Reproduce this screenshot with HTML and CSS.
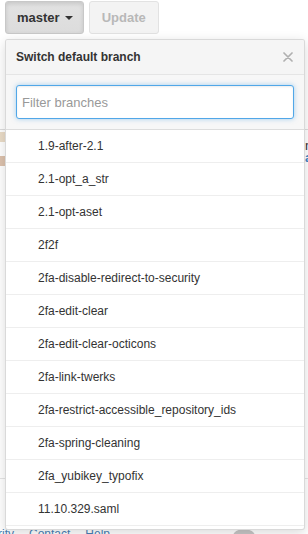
FILE: index.html
```html
<!DOCTYPE html>
<html>
<head>
<meta charset="utf-8">
<link rel="stylesheet" href="styles.css">
</head>
<body>
<div class="toolbar">
  <button class="btn btn-selected">master <span class="caret"></span></button>
  <button class="btn btn-disabled" disabled>Update</button>
</div>
<div class="page">
  <div class="bg-row">
    <span class="avatar"></span>
    <span class="bg-text">n<br><span class="bg-link">a</span></span>
  </div>
  <div class="bg-row bg-row-2"></div>
</div>
<div class="footer">
  <span class="footer-link">rity</span>
  <span class="footer-link">Contact</span>
  <span class="footer-link">Help</span>
  <span class="footer-logo"></span>
</div>

<div class="menu">
  <div class="menu-header">
    <span class="menu-title">Switch default branch</span>
    <svg class="menu-close" width="10" height="10" viewBox="0 0 10 10"><path d="M1 1L9 9M9 1L1 9" stroke="#b0b0b0" stroke-width="1.7" stroke-linecap="round"/></svg>
  </div>
  <div class="menu-filter">
    <input class="filter-input" type="text" placeholder="Filter branches">
  </div>
  <ul class="menu-list">
    <li class="menu-item">1.9-after-2.1</li>
    <li class="menu-item">2.1-opt_a_str</li>
    <li class="menu-item">2.1-opt-aset</li>
    <li class="menu-item">2f2f</li>
    <li class="menu-item">2fa-disable-redirect-to-security</li>
    <li class="menu-item">2fa-edit-clear</li>
    <li class="menu-item">2fa-edit-clear-octicons</li>
    <li class="menu-item">2fa-link-twerks</li>
    <li class="menu-item">2fa-restrict-accessible_repository_ids</li>
    <li class="menu-item">2fa-spring-cleaning</li>
    <li class="menu-item">2fa_yubikey_typofix</li>
    <li class="menu-item">11.10.329.saml</li>
  </ul>
</div>
</body>
</html>
```
FILE: styles.css
```css
* { box-sizing: border-box; }
html, body {
  margin: 0;
  padding: 0;
  background: #fff;
  font-family: "Liberation Sans", Helvetica, Arial, sans-serif;
  font-size: 13px;
  color: #333;
  height: 534px;
  overflow: hidden;
}
body { position: relative; }

.toolbar {
  display: flex;
  gap: 5px;
  padding: 1px 5px 0;
}
.btn {
  height: 33px;
  font-family: inherit;
  font-size: 13px;
  font-weight: bold;
  border-radius: 3px;
  display: flex;
  align-items: center;
  gap: 4px;
}
.btn-selected {
  padding: 0 10px 0 11px;
  color: #333;
  background: linear-gradient(#e2e2e2, #dcdcdc);
  border: 1px solid #c8c8c8;
  box-shadow: inset 0 2px 4px rgba(0,0,0,0.12);
}
.caret {
  display: inline-block;
  width: 0; height: 0;
  border-left: 4px solid transparent;
  border-right: 4px solid transparent;
  border-top: 4px solid #333;
  margin-left: 1px;
}
.btn-disabled {
  padding: 0 12px;
  color: #b8b8b8;
  background: #f3f3f3;
  border: 1px solid #e2e2e2;
}

.page {
  height: 493px;
  padding-top: 95px;
}
.bg-row {
  border-top: 1px solid #ddd;
  height: 349px;
  display: flex;
  justify-content: space-between;
}
.avatar {
  width: 5px;
  height: 34px;
  margin-top: 2px;
  opacity: 0.55;
  background: linear-gradient(#d9bf9a 0 30%, #fff 30% 70%, #c0906a 70%);
}
.bg-text {
  width: 3px;
  overflow: hidden;
  line-height: 12px;
  margin-top: 10px;
  font-size: 13px;
  color: #333;
}
.bg-link { color: #4183c4; font-weight: bold; }
.bg-row-2 { border-top: 1px solid #e5e5e5; height: 0; }

.footer {
  display: flex;
  gap: 15px;
  margin-left: -2px;
  height: 7px;
  overflow: hidden;
  font-size: 12px;
  line-height: 14px;
  position: relative;
}
.footer-link { color: #4a7fb5; }
.footer-logo {
  position: absolute;
  left: 235px;
  top: 2px;
  width: 22px;
  height: 14px;
  border-radius: 50% 50% 0 0;
  background: #c6c6c6;
}

.menu {
  position: absolute;
  left: 5px;
  top: 39px;
  width: 300px;
  height: 491px;
  background: #fff;
  border: 1px solid rgba(0,0,0,0.15);
  border-radius: 3px;
  box-shadow: 0 3px 12px rgba(0,0,0,0.15);
  overflow: hidden;
}
.menu-header {
  height: 35px;
  padding: 0 11px 0 10px;
  background: #f5f5f5;
  border-bottom: 1px solid #e5e5e5;
  display: flex;
  align-items: center;
  justify-content: space-between;
}
.menu-title {
  font-weight: bold;
  font-size: 12px;
  color: #333;
}
.menu-close { display: block; }
.menu-filter {
  padding: 10px;
  background: #f7f7f7;
  border-bottom: 1px solid #ddd;
  height: 55px;
}
.filter-input {
  display: block;
  width: 100%;
  height: 34px;
  padding: 0 5px;
  font-family: inherit;
  font-size: 13px;
  color: #333;
  background: #fff;
  border: 1px solid #51a7e8;
  border-radius: 3px;
  outline: none;
  box-shadow: inset 0 1px 2px rgba(0,0,0,0.075), 0 0 5px rgba(81,167,232,0.5);
}
.filter-input::placeholder { color: #999; }
.menu-list {
  list-style: none;
  margin: 0;
  padding: 0;
}
.menu-item {
  height: 33px;
  padding-left: 32px;
  display: flex;
  align-items: center;
  border-bottom: 1px solid #eee;
  font-size: 12px;
  color: #333;
}
```
